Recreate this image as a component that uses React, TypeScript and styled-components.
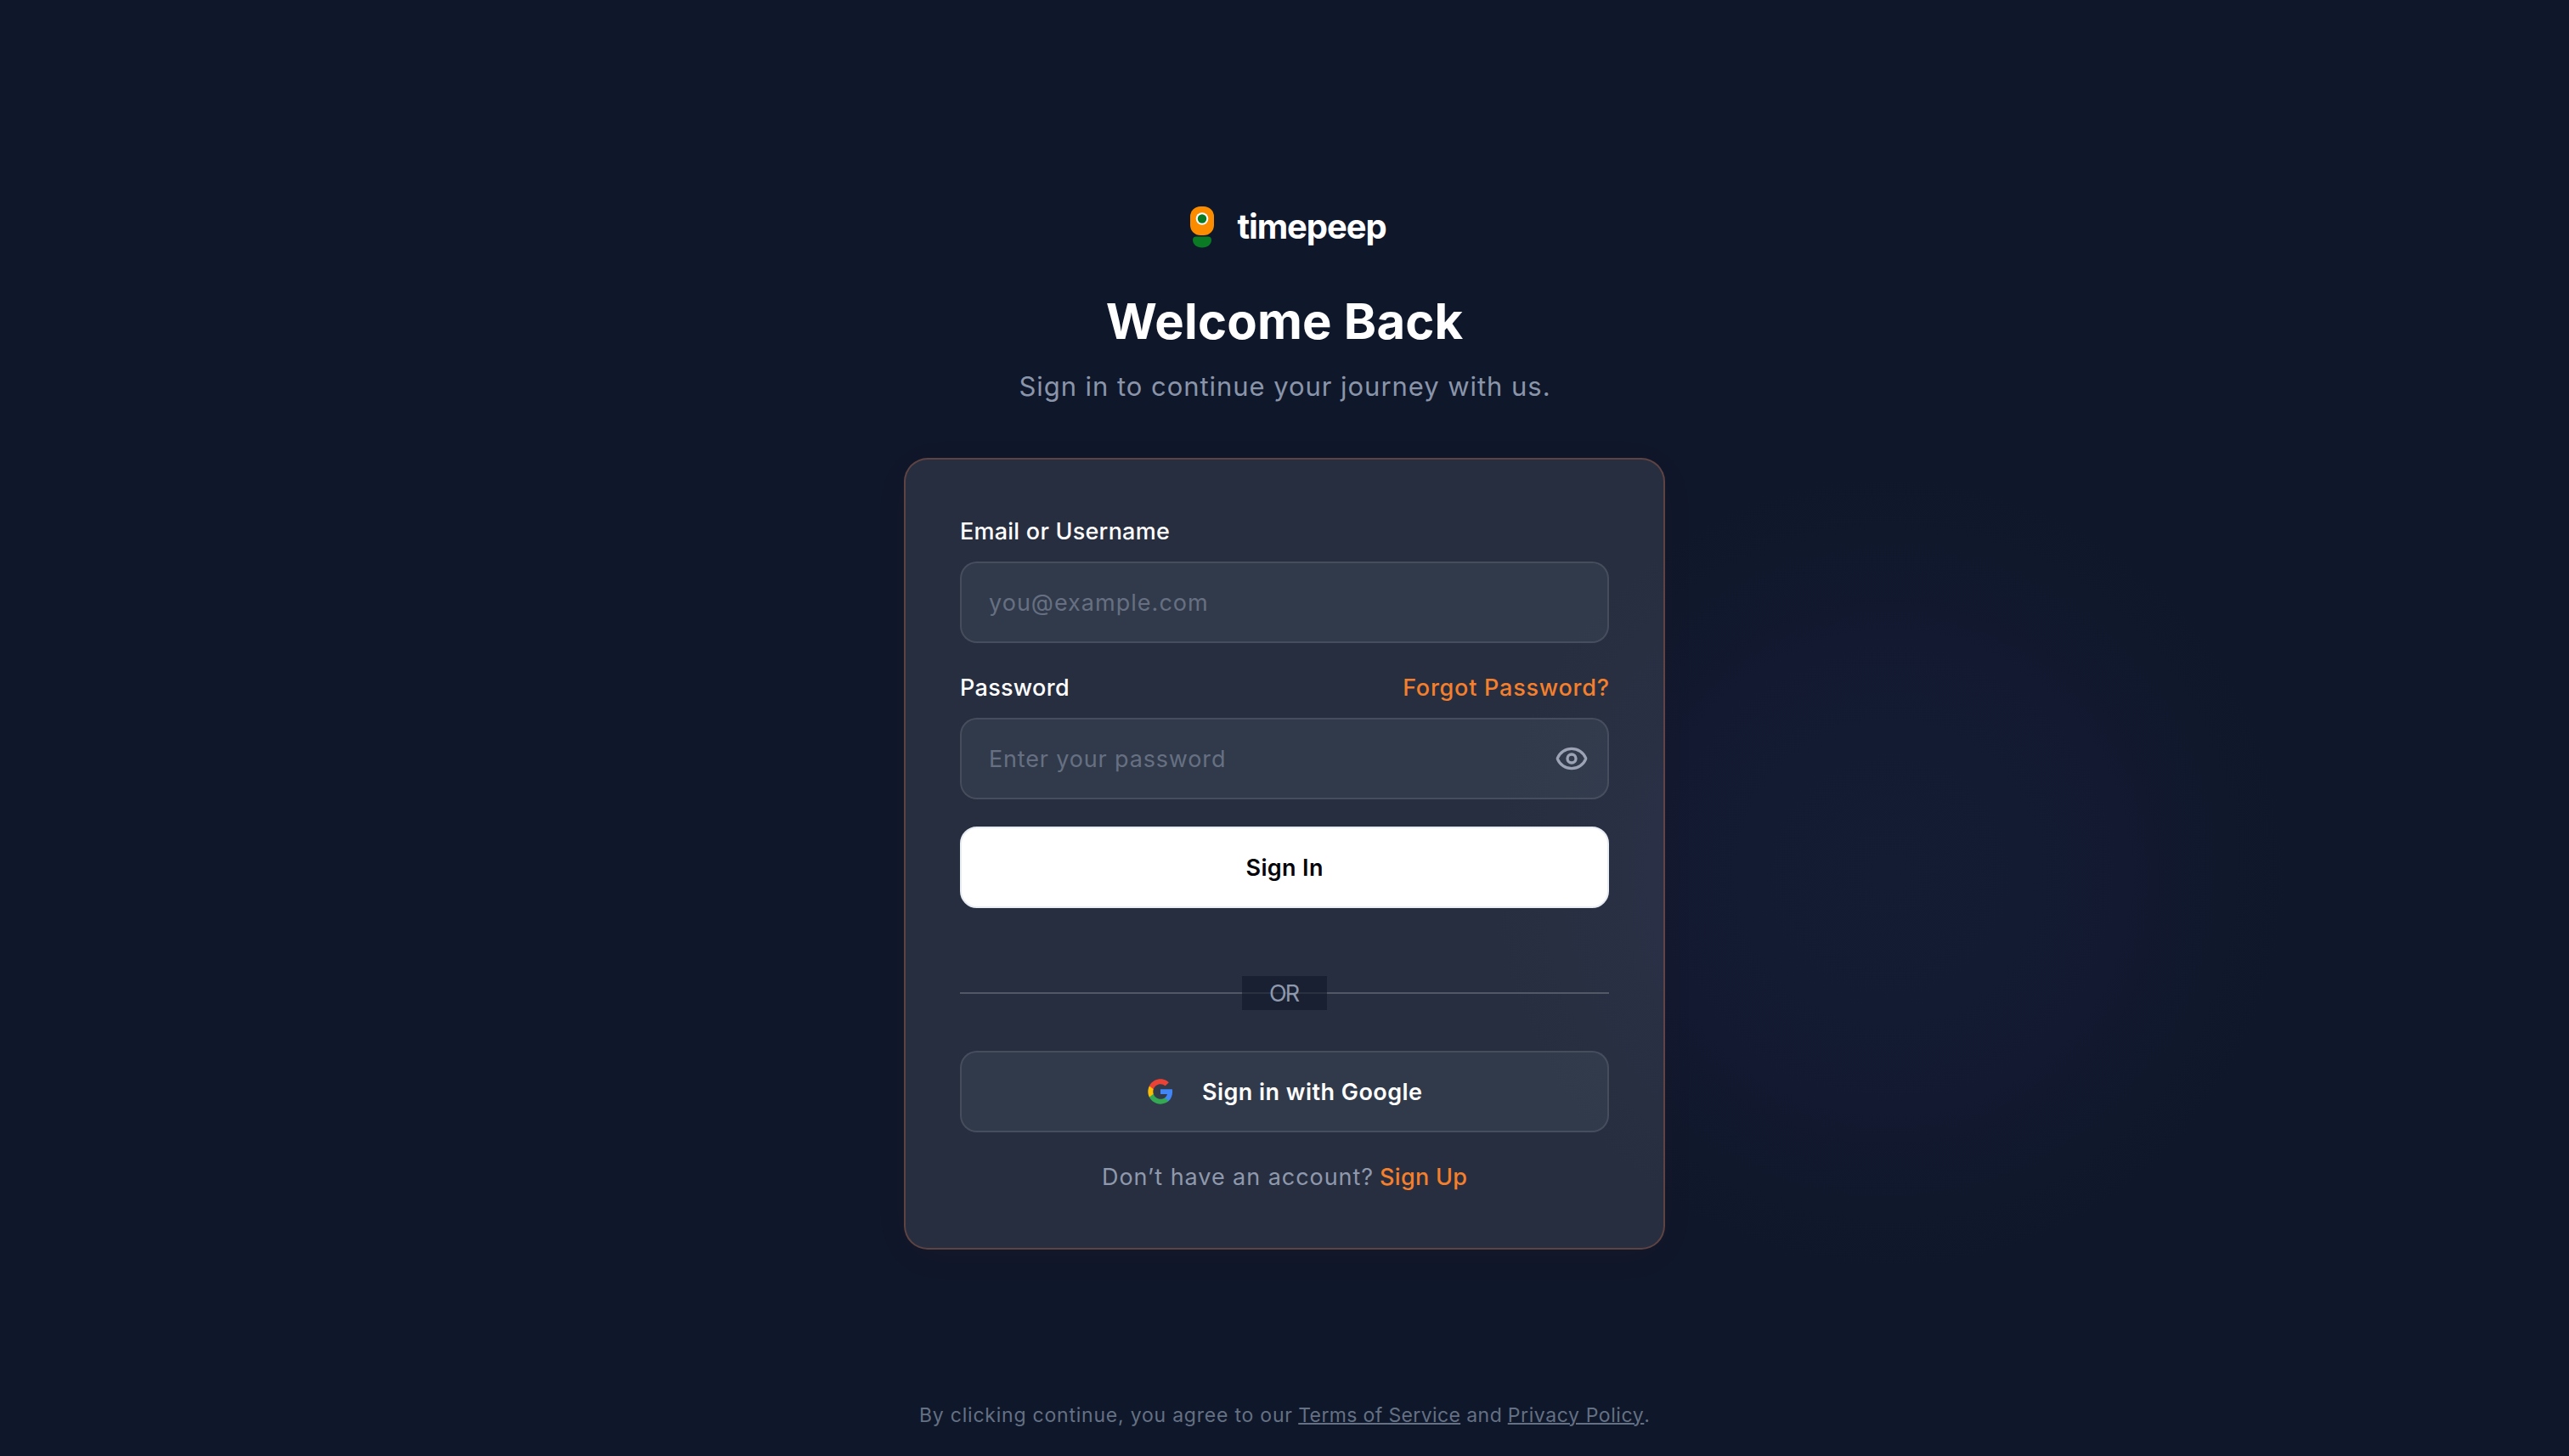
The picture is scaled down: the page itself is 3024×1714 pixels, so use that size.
import React, { useState } from "react";
import styled, { createGlobalStyle } from "styled-components";

const GlobalStyle = createGlobalStyle`
  *, *::before, *::after { box-sizing: border-box; }
  html, body { margin: 0; padding: 0; background: #0f172a; }
  body { font-family: Inter, "Noto Sans", sans-serif; -webkit-font-smoothing: antialiased; }
`;

const Page = styled.div`
  position: relative;
  display: flex;
  flex-direction: column;
  align-items: center;
  height: 1714px;
  overflow: hidden;
  padding-top: 236px;
  color: #fff;
  background: #0f172a;
`;

const Glow = styled.div`
  position: absolute;
  left: 1754px;
  top: 558px;
  width: 940px;
  height: 940px;
  border-radius: 50%;
  background: radial-gradient(closest-side, #141c34 0%, #131b32 35%, #121930 60%, #10182c 85%, #0f172a 100%);
`;

const Content = styled.main`
  position: relative;
  display: flex;
  flex-direction: column;
  align-items: center;
  width: 896px;
`;

const Text = styled.span<{ $track?: number }>`
  letter-spacing: ${(p) => p.$track ?? 0}px;
  margin-right: ${(p) => -(p.$track ?? 0)}px;
  white-space: pre;
`;

const Brand = styled.div`
  display: flex;
  align-items: center;
  gap: 27px;
  height: 60px;
  padding: 2px 0 0 10px;
  font-size: 40px;
  line-height: 48px;
  font-weight: 700;
`;

const Title = styled.h1`
  margin: 40px 0 0;
  font-size: 58px;
  line-height: 84px;
  font-weight: 700;
`;

const Subtitle = styled.p`
  margin: 11px 0 0;
  font-size: 31px;
  line-height: 48px;
  font-weight: 400;
  color: #8a95aa;
`;

const Card = styled.form`
  display: flex;
  flex-direction: column;
  width: 896px;
  height: 932px;
  margin-top: 60px;
  padding: 64px 64px 60px;
  border: 2px solid rgba(249, 125, 80, 0.27);
  border-radius: 28px;
  background: rgba(255, 255, 255, 0.1);
  box-shadow: 0 8px 50px rgba(249, 60, 22, 0.03);
`;

const LabelRow = styled.div`
  display: flex;
  flex: none;
  justify-content: space-between;
  align-items: center;
  height: 40px;
  margin-bottom: 16px;
  font-size: 27px;
  font-weight: 500;
`;

const Link = styled.a`
  color: #f47f2c;
  font-weight: 500;
`;

const Field = styled.div`
  display: flex;
  flex: none;
  align-items: center;
  height: 96px;
  margin-bottom: 32px;
  padding: 0 22px 0 32px;
  border: 2px solid rgba(255, 255, 255, 0.1);
  border-radius: 20px;
  background: rgba(215, 255, 255, 0.058);
`;

const Input = styled.input<{ $track: number }>`
  flex: 1;
  min-width: 0;
  padding: 0;
  border: 0;
  outline: 0;
  background: transparent;
  color: #fff;
  font: 400 27px Inter, sans-serif;
  letter-spacing: ${(p) => p.$track}px;
  &::placeholder { color: #667082; opacity: 1; }
`;

const IconButton = styled.button`
  display: flex;
  padding: 0;
  border: 0;
  background: none;
  color: #9ca3b4;
`;

const Button = styled.button<{ $primary?: boolean }>`
  display: flex;
  align-items: center;
  justify-content: center;
  gap: 33px;
  height: 96px;
  flex: none;
  border: 2px solid ${(p) => (p.$primary ? "#e8ecf3" : "rgba(255, 255, 255, 0.1)")};
  border-radius: 20px;
  background: ${(p) => (p.$primary ? "#fff" : "rgba(215, 255, 255, 0.058)")};
  color: ${(p) => (p.$primary ? "#020409" : "#fff")};
  font: 600 27px Inter, sans-serif;
`;

const Divider = styled.div`
  display: grid;
  flex: none;
  align-items: center;
  justify-items: center;
  height: 40px;
  margin: 80px 0 48px;
  > * { grid-area: 1 / 1; }
`;

const Rule = styled.div`
  width: 100%;
  height: 2px;
  background: rgba(255, 255, 255, 0.2);
`;

const Or = styled.div`
  display: flex;
  align-items: center;
  justify-content: center;
  width: 100px;
  height: 40px;
  background: rgba(15, 23, 42, 0.6);
  color: #8f99ad;
  font-size: 27px;
  font-weight: 400;
`;

const SignUp = styled.p`
  display: flex;
  justify-content: center;
  gap: 8px;
  margin: 33px 0 0;
  font-size: 27px;
  line-height: 40px;
  font-weight: 400;
  color: #8f99ad;
`;

const Legal = styled.footer`
  position: relative;
  display: flex;
  margin-top: 175px;
  font-size: 23px;
  line-height: 40px;
  font-weight: 400;
  color: #647083;
`;

const LegalLink = styled.a<{ $track: number }>`
  letter-spacing: ${(p) => p.$track}px;
  white-space: pre;
  text-decoration: underline;
  text-decoration-thickness: 2px;
`;

const Mascot = () => (
  <svg width="28" height="49" viewBox="0 0 28 49">
    <rect width="28" height="34" rx="12" fill="#fb8c00" />
    <circle cx="14" cy="14.5" r="7.3" fill="#fff" />
    <circle cx="14" cy="14.5" r="5.2" fill="#0b7a24" />
    <path d="M7 35.500h14c2.500 0 4 1.500 4 4 0 5-4.500 9-11 9S3 44.500 3 39.500c0-2.500 1.500-4 4-4Z" fill="#0b7a24" />
  </svg>
);

const EyeIcon = () => (
  <svg width="40" height="40" viewBox="0 0 24 24" fill="none" stroke="currentColor" strokeWidth="2" strokeLinecap="round" strokeLinejoin="round">
    <path d="M2.062 12.348a1 1 0 0 1 0-.696 10.750 10.750 0 0 1 19.876 0 1 1 0 0 1 0 .696 10.750 10.750 0 0 1-19.876 0" />
    <circle cx="12" cy="12" r="3" />
  </svg>
);

const GoogleIcon = () => (
  <svg width="32" height="32" viewBox="0 0 24 24">
    <path fill="#4285F4" d="M22.560 12.250c0-.78-.07-1.530-.2-2.250H12v4.260h5.920c-.26 1.370-1.040 2.530-2.210 3.310v2.770h3.570c2.080-1.920 3.280-4.740 3.280-8.090z" />
    <path fill="#34A853" d="M12 23c2.970 0 5.460-.98 7.280-2.660l-3.570-2.770c-.98.66-2.230 1.060-3.710 1.060-2.860 0-5.290-1.930-6.160-4.530H2.180v2.840C3.990 20.530 7.700 23 12 23z" />
    <path fill="#FBBC05" d="M5.840 14.090c-.22-.66-.35-1.360-.35-2.090s.13-1.430.35-2.090V7.070H2.180C1.430 8.550 1 10.220 1 12s.43 3.450 1.180 4.930l3.660-2.840z" />
    <path fill="#EA4335" d="M12 5.380c1.620 0 3.060.56 4.210 1.640l3.150-3.150C17.450 2.090 14.970 1 12 1 7.700 1 3.990 3.470 2.180 7.070l3.660 2.840c.87-2.600 3.300-4.530 6.160-4.530z" />
  </svg>
);

export default function App() {
  const [visible, setVisible] = useState(false);
  return (
    <Page>
      <GlobalStyle />
      <Glow />
      <Content>
        <Brand>
          <Mascot />
          <Text $track={-1.1}>timepeep</Text>
        </Brand>
        <Title><Text $track={0.2}>Welcome Back</Text></Title>
        <Subtitle><Text $track={0.95}>Sign in to continue your journey with us.</Text></Subtitle>
        <Card onSubmit={(e) => e.preventDefault()}>
          <LabelRow><Text $track={0.24}>Email or Username</Text></LabelRow>
          <Field><Input $track={1.02} placeholder="you@example.com" /></Field>
          <LabelRow>
            <Text $track={0.3}>Password</Text>
            <Link><Text $track={0.77}>Forgot Password?</Text></Link>
          </LabelRow>
          <Field>
            <Input $track={0.84} type={visible ? "text" : "password"} placeholder="Enter your password" />
            <IconButton type="button" aria-label="Show password" onClick={() => setVisible(!visible)}><EyeIcon /></IconButton>
          </Field>
          <Button $primary><Text $track={0.35}>Sign In</Text></Button>
          <Divider>
            <Rule />
            <Or><Text $track={-2}>OR</Text></Or>
          </Divider>
          <Button type="button"><GoogleIcon /><Text $track={0.45}>Sign in with Google</Text></Button>
          <SignUp><Text $track={0.95}>Don’t have an account?</Text><Link><Text $track={0.3}>Sign Up</Text></Link></SignUp>
        </Card>
      </Content>
      <Legal>
        <Text $track={0.78}>By clicking continue, you agree to our </Text>
        <LegalLink $track={0.36}>Terms of Service</LegalLink>
        <Text $track={0.5}> and </Text>
        <LegalLink $track={0.6}>Privacy Policy</LegalLink>
        <Text>.</Text>
      </Legal>
    </Page>
  );
}
